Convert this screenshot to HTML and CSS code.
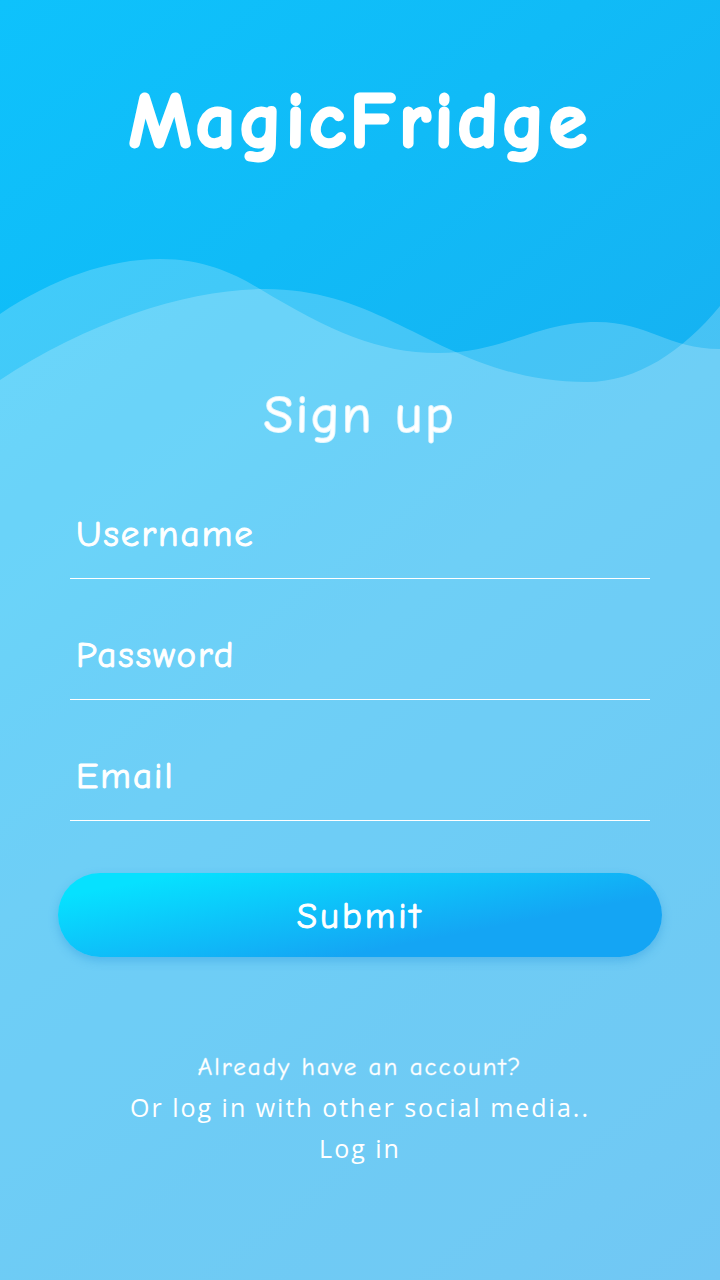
FILE: index.html
```html
<!DOCTYPE html>
<html lang="en">
<head>
<meta charset="utf-8">
<meta name="viewport" content="width=device-width, initial-scale=1">
<title>MagicFridge – Sign up</title>
<link rel="stylesheet" href="styles.css">
</head>
<body>
<svg class="waves" viewBox="0 0 720 1280" preserveAspectRatio="none" aria-hidden="true">
<path class="wave" d="M0 314C52 279 108 259 160 259C205 259 235 274 260 289C330 331 378 353 438 353C505 353 535 322 597 322C648 322 668 349 720 349V1280H0Z"/>
<path class="wave" d="M0 380C90 320 190 289 265 289C393 289 446 382 587 382C637 382 683 351 720 306V1280H0Z"/>
</svg>
<main class="screen">
<header class="brand"><h1 class="brand-name">MagicFridge</h1></header>
<h2 class="title">Sign up</h2>
<form class="form">
<div class="fields">
<input class="field" type="text" placeholder="Username" aria-label="Username">
<input class="field" type="password" placeholder="Password" aria-label="Password">
<input class="field" type="email" placeholder="Email" aria-label="Email">
</div>
<button class="submit" type="submit">Submit</button>
</form>
<footer class="links">
<p class="hint">Already have an account?</p>
<p class="alternative">Or log in with other social media..</p>
<a class="login" href="#login">Log in</a>
</footer>
</main>
</body>
</html>
```
FILE: styles.css
```css
* { box-sizing: border-box; }
body {
  position: relative;
  min-height: 100vh;
  margin: 0;
  color: #fff;
  font-family: "Comic Sans MS", "Comic Neue", "Open Sans", sans-serif;
  background: linear-gradient(142deg, #0ec2fc 0%, #10bbf7 25%, #16b2f2 50%, #1ba7ed 100%);
}
.waves {
  position: absolute;
  inset: 0;
  width: 100%;
  height: 100%;
}
.wave { fill: #fff; fill-opacity: .21; }
.screen {
  position: relative;
  display: flex;
  flex-direction: column;
  min-height: 100vh;
  padding: 72px 58px 100px;
}
.brand { text-align: center; }
.brand-name {
  margin: 0;
  font-size: 78px;
  line-height: 100px;
  letter-spacing: 4px;
  -webkit-text-stroke: 3px #fff;
}
.title {
  margin: 201px 0 0;
  font-size: 53px;
  font-weight: 400;
  line-height: 84px;
  letter-spacing: 3px;
  text-align: center;
  -webkit-text-stroke: 2px #fffc;
}
.fields { display: grid; gap: 40px; margin: 41px 12px 52px; }
.field {
  width: 100%;
  height: 81px;
  padding: 0 6px 8px;
  border: 0;
  border-bottom: 1px solid #fff;
  outline: 0;
  background: transparent;
  color: #fff;
  font: 37px "Comic Sans MS", "Comic Neue", "Open Sans", sans-serif;
  letter-spacing: 2px;
  -webkit-text-stroke: 1px #fff;
}
.field::placeholder { color: #fff; opacity: 1; }
.submit {
  width: 100%;
  height: 84px;
  padding: 2px 0 0;
  border: 0;
  border-radius: 42px;
  background: linear-gradient(169deg, #06e1ff 12%, #14a5f4 69%);
  box-shadow: 0 4px 10px #2897dc66;
  color: #fff;
  font: 37px "Comic Sans MS", "Comic Neue", "Open Sans", sans-serif;
  letter-spacing: 3px;
  -webkit-text-stroke: 1px #fff;
}
.links {
  margin-top: 89px;
  font-size: 25px;
  line-height: 41px;
  letter-spacing: 2px;
  text-align: center;
}
.hint, .alternative { margin: 0; }
.hint { -webkit-text-stroke: 1px #fff6; }
.alternative, .login { font-family: "Open Sans", sans-serif; }
.login { color: #fff; text-decoration: none; }
```
